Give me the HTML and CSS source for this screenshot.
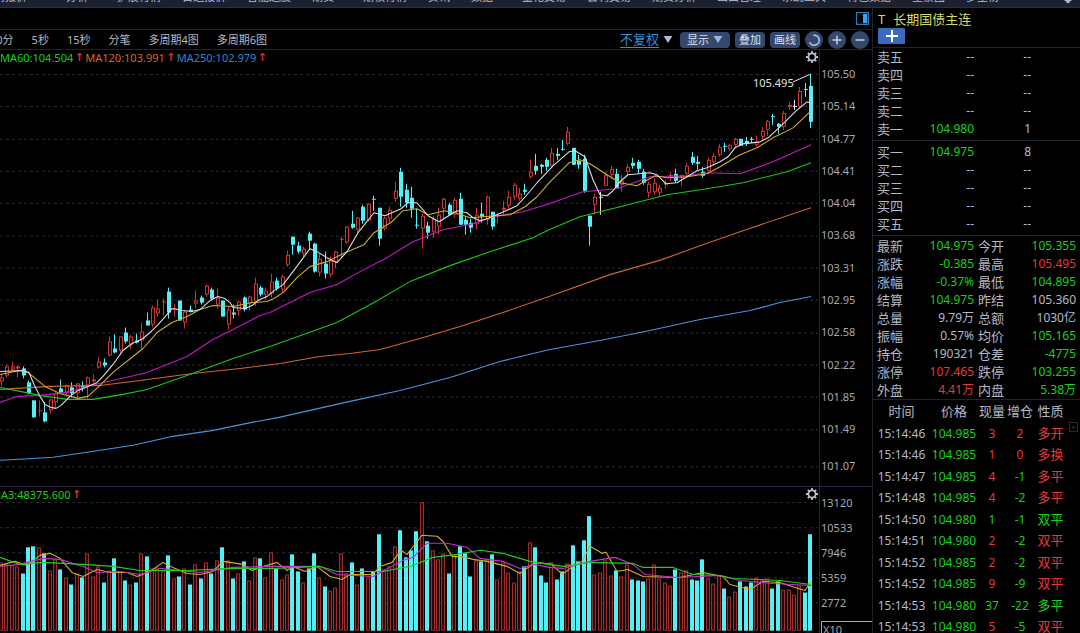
FILE: index.html
```html
<!DOCTYPE html>
<html lang="zh-CN">
<head>
<meta charset="utf-8">
<title>长期国债主连</title>
<link rel="stylesheet" href="styles.css">
</head>
<body>
<header class="menu">
  <nav class="menu-items">
    <a href="#">行情报价</a><a href="#" class="far">分析</a><a href="#" class="near">扩展行情</a><a href="#">自选报价</a><a href="#">智能选股</a><a href="#">期货</a><a href="#" class="near">期权行情</a><a href="#">资讯</a><a href="#">数据</a><a href="#" class="near">量化交易</a><a href="#">套利交易</a><a href="#">期货分析</a><a href="#">画面管理</a><a href="#">系统工具</a><a href="#">特色数据</a><a href="#">全景图</a><a href="#">多空榜</a>
  </nav>
  <svg class="menu-gear" viewBox="0 0 16 16"><circle cx="8" cy="8" r="5"/><path d="M8 12v4"/></svg>
</header>
<div class="workspace">
  <main class="chart">
    <div class="strip">
      <button class="plain" aria-label="侧栏"><svg class="side-icon" viewBox="0 0 14 14"><rect x=".7" y=".7" width="12.6" height="12.6" fill="none" stroke="#2b7fc0" stroke-width="1.3"/><rect x="7.5" y="2" width="4.5" height="10" fill="#3ba0f0"/></svg></button>
    </div>
    <div class="toolbar">
      <div class="periods">
        <button>30分</button><button>5秒</button><button>15秒</button><button>分笔</button><button>多周期4图</button><button>多周期6图</button>
      </div>
      <div class="tools">
        <button class="adjust"><span>不复权</span><svg class="caret" viewBox="0 0 10 8"><path d="M0 0h10L5 8z"/></svg></button>
        <button class="pill wide">显示<svg class="caret" viewBox="0 0 10 8"><path d="M0 0h10L5 8z"/></svg></button>
        <button class="pill">叠加</button>
        <button class="pill">画线</button>
        <button class="round" aria-label="还原"><svg viewBox="0 0 18 18"><path d="M8.5 4.2A5 5 0 1 1 4.6 11.2M8.5 4.2l2 .3"/></svg></button>
        <button class="round" aria-label="放大"><svg viewBox="0 0 18 18"><path d="M9 4.5v9M4.500 9h9"/></svg></button>
        <button class="round" aria-label="缩小"><svg viewBox="0 0 18 18"><path d="M4.500 9h9"/></svg></button>
      </div>
    </div>
    <section class="panel price">
      <div class="plot">
        <svg id="price-plot" viewBox="0 50 819 437" preserveAspectRatio="none"></svg>
        <div class="legend">
          <span class="ma60">MA60:104.504</span><i>↑</i><span class="ma120">MA120:103.991</span><i>↑</i><span class="ma250">MA250:102.979</span><i>↑</i>
        </div>
        <button class="plain gear" aria-label="设置"><svg viewBox="0 0 12 12"><circle cx="6" cy="6" r="3.600"/><path d="M6 0v2.400M6 9.600V12M0 6h2.400M9.600 6H12M1.800 1.800l1.600 1.600M8.600 8.600l1.600 1.600M10.200 1.800L8.600 3.400M3.400 8.600l-1.600 1.600"/></svg></button>
      </div>
      <div class="axis price-axis">
        <div class="ticks">
          <span>105.50</span><span>105.14</span><span>104.77</span><span>104.41</span><span>104.04</span><span>103.68</span><span>103.31</span><span>102.95</span><span>102.58</span><span>102.22</span><span>101.85</span><span>101.49</span>
        </div>
        <span class="last">101.07</span>
      </div>
    </section>
    <section class="panel volume">
      <div class="plot">
        <svg id="volume-plot" viewBox="0 488 819 145" preserveAspectRatio="none"></svg>
        <div class="legend vol-legend"><span class="ma60">MA3:48375.600</span><i>↑</i></div>
        <button class="plain gear" aria-label="设置"><svg viewBox="0 0 12 12"><circle cx="6" cy="6" r="3.600"/><path d="M6 0v2.400M6 9.600V12M0 6h2.400M9.600 6H12M1.800 1.800l1.600 1.600M8.600 8.600l1.600 1.600M10.200 1.800L8.600 3.400M3.400 8.600l-1.600 1.600"/></svg></button>
      </div>
      <div class="axis volume-axis">
        <span>13120</span><span>10533</span><span>7946</span><span>5359</span><span>2772</span>
        <span class="unit">X10</span>
      </div>
    </section>
  </main>
  <aside class="quote">
    <div class="title">
      <h1><span>T</span>长期国债主连</h1>
      <button class="add" aria-label="加自选"><svg viewBox="0 0 12 12"><path d="M6 0v12M0 6h12"/></svg></button>
    </div>
    <table class="book">
      <tr><th>卖五</th><td>--</td><td>--</td></tr>
      <tr><th>卖四</th><td>--</td><td>--</td></tr>
      <tr><th>卖三</th><td>--</td><td>--</td></tr>
      <tr><th>卖二</th><td>--</td><td>--</td></tr>
      <tr><th>卖一</th><td class="g">104.980</td><td>1</td></tr>
    </table>
    <table class="book buy">
      <tr><th>买一</th><td class="g">104.975</td><td>8</td></tr>
      <tr><th>买二</th><td>--</td><td>--</td></tr>
      <tr><th>买三</th><td>--</td><td>--</td></tr>
      <tr><th>买四</th><td>--</td><td>--</td></tr>
      <tr><th>买五</th><td>--</td><td>--</td></tr>
    </table>
    <table class="stats">
      <tr><th>最新</th><td class="g">104.975</td><th>今开</th><td class="g">105.355</td></tr>
      <tr><th>涨跌</th><td class="g">-0.385</td><th>最高</th><td class="r">105.495</td></tr>
      <tr><th>涨幅</th><td class="g">-0.37%</td><th>最低</th><td class="g">104.895</td></tr>
      <tr><th>结算</th><td class="g">104.975</td><th>昨结</th><td>105.360</td></tr>
      <tr><th>总量</th><td>9.79万</td><th>总额</th><td>1030亿</td></tr>
      <tr><th>振幅</th><td>0.57%</td><th>均价</th><td class="g">105.165</td></tr>
      <tr><th>持仓</th><td>190321</td><th>仓差</th><td class="g">-4775</td></tr>
      <tr><th>涨停</th><td class="r">107.465</td><th>跌停</th><td class="g">103.255</td></tr>
      <tr><th>外盘</th><td class="r">4.41万</td><th>内盘</th><td class="g">5.38万</td></tr>
    </table>
    <div class="trades">
      <table class="ticks-table">
        <thead><tr><th class="c-time">时间</th><th class="c-price">价格</th><th class="c-num">现量</th><th class="c-num">增仓</th><th class="c-kind">性质</th></tr></thead>
        <tbody>
          <tr><td>15:14:46</td><td class="g">104.985</td><td class="r">3</td><td class="r">2</td><td class="r k">多开</td></tr>
          <tr><td>15:14:46</td><td class="g">104.985</td><td class="r">1</td><td class="r">0</td><td class="r k">多换</td></tr>
          <tr><td>15:14:47</td><td class="g">104.985</td><td class="r">4</td><td class="g">-1</td><td class="r k">多平</td></tr>
          <tr><td>15:14:48</td><td class="g">104.985</td><td class="r">4</td><td class="g">-2</td><td class="r k">多平</td></tr>
          <tr><td>15:14:50</td><td class="g">104.980</td><td class="g">1</td><td class="g">-1</td><td class="g k">双平</td></tr>
          <tr><td>15:14:51</td><td class="g">104.980</td><td class="r">2</td><td class="g">-2</td><td class="r k">双平</td></tr>
          <tr><td>15:14:52</td><td class="g">104.985</td><td class="r">2</td><td class="g">-2</td><td class="r k">双平</td></tr>
          <tr><td>15:14:52</td><td class="g">104.985</td><td class="r">9</td><td class="g">-9</td><td class="r k">双平</td></tr>
          <tr><td>15:14:53</td><td class="g">104.980</td><td class="g">37</td><td class="g">-22</td><td class="g k">多平</td></tr>
          <tr><td>15:14:53</td><td class="g">104.980</td><td class="r">5</td><td class="g">-5</td><td class="r k">双平</td></tr>
        </tbody>
      </table>
      <div class="scroll"><button class="plain up" aria-label="上翻"><svg viewBox="0 0 10 10"><path d="M2.500 6.500L5 3.500l2.500 3z"/></svg></button></div>
    </div>
  </aside>
</div>
<script src="chart.js"></script>
</body>
</html>
```

FILE: styles.css
```css
* { box-sizing: border-box; }

body {
  margin: 0;
  height: 100vh;
  display: flex;
  flex-direction: column;
  overflow: hidden;
  background: #000;
  color: #b4b8c6;
  font-family: "Noto Sans", "Noto Sans CJK SC", sans-serif;
  font-size: 12px;
}

button {
  font: inherit;
  color: inherit;
  border: 0;
  padding: 0;
  background: none;
  white-space: nowrap;
}

.plain { display: block; line-height: 0; }

/* menu bar */
.menu {
  flex: none;
  height: 8px;
  display: flex;
  align-items: flex-end;
  justify-content: space-between;
  overflow: hidden;
  background: #1b2130;
  border-bottom: 1px solid #2b3040;
  padding: 0 4px 4px 0;
}
.menu-items { display: flex; gap: 21px; margin-left: -17px; }
.menu-items a {
  color: #b9bfce;
  font-size: 11px;
  line-height: 12px;
  text-decoration: none;
  white-space: nowrap;
}
.menu-items .far { margin-left: 18px; }
.menu-items .near { margin-left: 8px; }
.menu-gear { width: 16px; height: 16px; fill: #b9bfce; stroke: #b9bfce; stroke-width: 3; }

.workspace { flex: 1; min-height: 0; display: flex; }

/* chart side */
.chart { flex: 1; min-width: 0; display: flex; flex-direction: column; }
.strip {
  flex: none;
  height: 22px;
  display: flex;
  justify-content: flex-end;
  align-items: center;
  padding: 0 3px;
  border-bottom: 1px solid #20222c;
}
.side-icon { width: 13px; height: 13px; }
.toolbar {
  flex: none;
  height: 20px;
  display: flex;
  justify-content: space-between;
  align-items: center;
  border-bottom: 1px solid #20222c;
  padding-right: 3px;
}
.periods { display: flex; gap: 18px; margin-left: -10px; font-size: 11px; line-height: 18px; }
.tools { display: flex; align-items: center; gap: 5px; }
.adjust { display: flex; align-items: center; gap: 4px; font-size: 13px; color: #2f8fd6; margin-right: 2px; }
.adjust span { line-height: 16px; border-bottom: 1px solid #2f8fd6; }
.caret { width: 10px; height: 7px; fill: #b4b8d0; }
.pill {
  height: 16px;
  padding: 0 4px;
  border-radius: 4px;
  background: #34486e;
  color: #dde4f2;
  font-size: 11px;
  line-height: 16px;
}
.pill.wide { display: flex; align-items: center; gap: 4px; padding: 0 7px; }
.pill .caret { fill: #9fb4dc; }
.round { width: 18px; height: 18px; border-radius: 50%; background: #34486e; }
.round svg { display: block; fill: none; stroke: #c4cfe4; stroke-width: 1.5; }

.panel { display: flex; min-height: 0; }
.price { flex: 437 1 0; }
.volume { flex: 146 1 0; border-top: 1px solid #2c2b42; }
.plot { flex: 1; min-width: 0; position: relative; }
.plot > svg { position: absolute; width: 100%; height: 100%; }
.legend {
  position: absolute;
  top: 0;
  left: 0;
  display: flex;
  font-size: 11px;
  line-height: 15px;
  white-space: nowrap;
}
.legend i { width: 12px; text-align: center; font-style: normal; font-weight: 700; color: #e02b3c; font-family: "DejaVu Sans", sans-serif; }
.vol-legend { left: -9px; }
.ma60 { color: #14d314; }
.ma120 { color: #d8691f; }
.ma250 { color: #2f86d2; }
.gear { position: absolute; top: 1px; right: 1px; }
.gear svg { width: 12px; height: 12px; fill: none; stroke: #b9bfd0; stroke-width: 1.800; }
.axis {
  flex: none;
  width: 53px;
  border-left: 1px solid #24242f;
  padding-left: 1px;
  display: flex;
  flex-direction: column;
  overflow: hidden;
  color: #a6a8b4;
  font-size: 11px;
  line-height: 18px;
}
.price-axis { padding-top: 15px; padding-bottom: 11px; }
.ticks { flex: 1; display: flex; flex-direction: column; justify-content: space-between; }
.last { margin-top: 19px; }
.volume-axis { padding-top: 3px; line-height: 25px; }
.unit {
  flex: none;
  margin-top: 6px;
  padding-left: 1px;
  border: solid #a6a8b4;
  border-width: 1px 0 0 1px;
  line-height: 16px;
}

/* quote side */
.quote {
  flex: none;
  width: 208px;
  border-left: 1px solid #20222e;
  overflow: hidden;
  display: flex;
  flex-direction: column;
}
.title { height: 40px; flex: none; padding: 2px 5px; border-bottom: 1px solid #20222c; }
h1 { margin: 0; display: flex; gap: 8px; font-size: 13px; line-height: 18px; font-weight: 400; color: #d3d86a; }
.add { display: flex; align-items: center; justify-content: center; width: 27px; height: 16px; background: #3a6abf; border-radius: 1px; }
.add svg { width: 12px; height: 12px; stroke: #fff; stroke-width: 2; }

table { border-collapse: collapse; table-layout: fixed; flex: none; }
th, td { padding: 0; font-weight: 400; white-space: nowrap; line-height: 18px; height: 18px; }
th { font-size: 13px; }
.book, .stats { display: grid; border-bottom: 1px solid #20222c; padding: 0 4px; }
.book tbody, .stats tbody { display: block; }
.book tr { display: grid; grid-template-columns: 26px 71px 57px; }
.stats tr { display: grid; grid-template-columns: 26px 71px 30px 1fr; }
.book th, .stats th { text-align: left; }
.stats th + td + th { padding-left: 4px; }
.book td, .stats td { text-align: right; }
.book { height: 93px; }
.book.buy { height: 95px; padding-top: 2px; }
.stats { height: 164px; padding-top: 1px; }

.g { color: #16d116; }
.r { color: #e23a3a; }
.k { font-size: 13px; }

.trades { flex: 1; min-height: 0; display: flex; justify-content: space-between; }
.ticks-table { width: 194px; }
.ticks-table th, .ticks-table td { text-align: center; height: 22px; line-height: 21px; }
.ticks-table tr:nth-child(even) td { height: 21px; }
.c-time { width: 57px; }
.c-price { width: 48px; }
.c-num { width: 28px; }
.c-kind { width: 33px; }
.scroll { padding: 22px 2px 0 0; }
.up svg { width: 9px; height: 10px; fill: #3a3a42; border: 1px solid #2a2a30; }
```

FILE: chart.js
```js
const NS = "http://www.w3.org/2000/svg";
const STEP = 5.395;
const CYAN = "#54f0f8";
const RED = "#d03434";

// kind, high, body top, body bottom, low
const candles = `r 375 378 382 387;r 365 367 376 378;r 362 367 370 372;r 366 367 369 378;c 367 369 376 379;c 381 383 394 395;c 401 401 418 418;r 401 411 412 417;c 403 413 422 423;r 400 400 411 414;
r 393 394 403 408;c 380 389 393 394;r 385 386 393 395;c 383 388 394 398;r 384 384 394 399;c 382 386 388 392;r 377 378 386 399;r 375 380 382 383;r 358 362 368 369;c 359 363 366 368;
r 337 342 356 357;c 335 349 353 354;r 337 337 351 355;c 328 333 342 344;r 335 337 345 349;c 334 341 343 344;r 323 332 341 349;c 313 321 326 326;r 306 308 325 328;r 300 309 314 317;
r 299 302 303 316;c 288 292 313 319;r 304 309 310 317;c 301 301 321 321;r 311 312 323 329;c 306 310 312 313;r 291 301 304 309;c 296 298 303 305;r 285 286 295 297;c 288 290 299 301;
r 289 298 305 309;c 301 301 317 317;r 307 310 325 330;c 305 313 315 319;r 301 302 311 316;c 297 298 310 312;r 296 297 304 311;r 278 284 302 306;c 286 288 295 297;r 288 291 295 300;
r 274 282 294 298;c 278 281 289 291;r 275 277 290 293;r 251 255 265 267;c 237 237 245 255;c 242 246 252 254;r 247 249 254 257;c 232 234 241 250;c 243 244 272 273;r 254 259 273 277;
c 252 264 274 279;r 257 261 275 277;r 251 252 262 269;r 237 239 240 258;r 226 227 243 244;c 211 224 228 229;r 217 218 230 232;c 205 207 221 224;r 204 204 221 222;c 196 199 200 211;
c 208 208 239 246;r 217 218 229 231;r 207 210 219 223;r 182 191 199 202;c 168 172 197 207;c 184 190 203 208;c 187 198 209 218;c 209 225 226 229;r 214 216 229 249;c 222 226 233 239;
r 216 219 232 238;r 208 215 227 235;r 198 199 209 219;c 203 205 215 216;r 198 200 215 218;c 193 199 225 225;c 217 220 225 235;c 219 223 228 233;r 208 215 224 230;c 203 214 217 223;
r 196 197 220 225;c 212 212 227 230;r 213 216 217 224;r 201 208 210 215;r 191 197 206 209;r 183 185 197 200;r 188 194 199 201;c 184 190 192 195;r 160 172 177 179;c 154 166 171 175;
c 164 165 167 174;c 158 160 167 171;r 148 153 166 168;c 148 154 156 160;c 140 149 150 151;r 127 132 144 145;c 148 148 165 165;c 155 161 165 169;c 155 159 191 193;c 216 216 227 246;
r 194 197 205 215;w 192 197 198 215;r 172 175 186 186;r 166 169 175 179;c 169 174 188 188;r 175 181 185 192;r 164 167 172 176;c 158 163 166 169;c 160 162 169 174;c 169 172 183 185;
r 182 184 193 198;r 179 183 192 195;r 185 188 193 197;r 180 183 185 189;r 172 175 177 181;c 169 174 181 183;r 175 175 178 186;r 163 166 174 177;c 152 157 163 165;c 156 162 164 170;
c 167 172 176 178;r 158 160 171 173;r 153 156 162 166;r 144 147 155 157;c 143 146 147 152;r 144 145 149 151;r 138 139 145 147;c 139 139 146 146;c 137 141 144 146;c 137 139 140 143;
r 136 142 145 147;r 127 131 137 140;r 120 121 130 136;c 114 116 117 125;c 123 124 127 134;r 111 113 127 130;r 102 105 107 110;w 100 106 107 110;r 87 91 107 109;c 83 89 90 97;c 74 86 122 128`
  .split(";").map(row => {
    const [kind, ...n] = row.trim().split(" ");
    return [kind, ...n.map(Number)];
  });

const volumes = `563 565 566 567 574 548 547 548 554 571 560 570 578 585 574 578 554 577 567 583
571 559 572 581 585 583 554 557 569 568 571 556 579 577 569 585 565 579 563 574
561 548 561 579 574 562 581 558 559 578 553 569 580 575 555 572 583 569 554 578
587 591 588 554 574 563 585 569 578 572 535 570 567 547 531 558 551 532 503 542
551 560 554 574 556 547 554 577 561 562 560 555 580 563 573 583 572 567 543 548
576 583 563 580 572 564 546 562 541 517 575 573 561 576 571 577 565 580 581 582
579 565 579 583 586 570 573 571 580 581 560 579 584 576 589 597 592 582 587 583
578 580 579 589 582 590 590 595 586 593 535`.split(/\s+/).map(Number);

const priceLines = {
  "#4a94e0": "0,461 20,460 53,458 87,453 133,446 173,437 213,431 247,424 279,418 350,402 400,391 450,378 500,362 550,350 600,341 650,331 700,320 750,311 780,303 811,297",
  "#d0662c": "0,390 50,387 100,386 140,381 193,374 240,369 280,364 320,357 350,354 380,350 420,339 460,327 500,314 549,297 610,275 662,260 700,246 740,232 811,208",
  "#18c818": "0,388 20,392 40,396 67,400 93,400 123,395 147,390 187,376 233,359 270,347 337,323 374,303 410,282 450,266 490,252 533,238 549,230 580,217 620,207 667,195 707,189 743,183 787,172 811,163",
  "#c818c8": "0,403 17,397 40,396 67,393 90,386 117,380 147,373 167,365 187,357 213,340 233,330 260,316 270,313 310,293 337,285 360,272 387,258 413,242 443,230 473,224 493,217 523,212 549,204 583,192 617,189 650,177 687,176 707,173 740,174 773,162 811,145",
  "#d2ae28": "0,375 20,371 28,373 45,387 60,394 78,399 88,397 100,386 113,373 133,357 143,349 157,333 172,323 187,317 200,310 213,306 233,307 252,303 267,302 274,299 283,293 298,277 310,267 327,262 345,253 364,245 374,233 392,222 403,211 417,209 428,215 445,211 455,213 470,218 483,217 510,215 525,207 537,197 549,183 569,163 580,160 590,164 607,175 620,183 637,186 655,176 667,178 687,177 707,174 720,167 740,155 757,148 773,138 793,128 810,112",
  "#e0dce0": "0,372 23,371 29,373 34,385 40,397 45,405 51,408 56,409 61,406 70,397 78,391 88,387 97,383 103,377 113,365 123,351 132,344 137,342 143,339 150,333 158,325 167,315 172,309 183,311 192,312 200,310 210,301 218,297 225,299 230,303 233,308 245,309 252,306 258,301 267,297 274,291 283,285 293,272 310,249 317,252 327,258 337,263 347,252 358,233 374,213 385,216 401,209 408,203 417,203 428,216 439,222 447,217 457,211 467,213 473,218 480,221 487,219 497,215 517,206 527,195 537,183 553,166 569,152 575,151 585,157 593,180 600,195 607,196 613,191 620,182 628,175 650,173 657,175 666,184 677,183 687,177 697,171 707,168 720,162 728,157 735,148 743,144 760,142 768,138 780,127 795,112 807,102 811,103"
};

const volumeLines = {
  "#d2ae28": "0,566 15,562 27,566 40,556 50,554 60,559 72,573 83,577 97,570 110,573 127,573 137,577 150,572 163,563 173,568 187,574 200,575 213,572 223,562 243,565 252,571 263,567 277,563 287,571 293,567 305,572 317,567 330,577 342,580 350,575 373,575 380,567 392,563 401,551 407,555 422,536 437,537 443,542 452,557 465,558 473,560 487,562 507,567 520,574 535,563 552,565 562,575 573,567 582,562 590,547 602,554 606,553 617,572 628,570 643,577 680,578 703,573 723,577 730,585 750,590 763,582 780,583 795,588 805,591 811,582",
  "#c830c8": "0,567 20,565 43,559 60,560 83,567 97,573 120,572 140,575 160,569 200,573 233,568 270,567 320,567 337,575 373,577 403,561 413,558 427,544 447,544 467,548 480,559 503,562 520,569 535,565 549,568 563,569 590,562 615,558 633,565 645,575 677,578 720,576 740,581 773,584 811,586",
  "#20d020": "0,558 20,565 43,563 83,565 113,567 140,571 187,571 233,569 275,569 320,567 337,572 383,572 410,567 433,558 457,555 480,551 503,554 530,562 549,565 563,567 590,563 633,564 643,568 673,568 693,575 720,576 733,579 780,581 811,585"
};

function draw(svg, tag, attrs) {
  const el = document.createElementNS(NS, tag);
  for (const key in attrs) el.setAttribute(key, attrs[key]);
  svg.appendChild(el);
  return el;
}

function grid(svg, levels) {
  for (const y of levels) {
    draw(svg, "path", { d: `M0 ${y + 0.5}H818`, stroke: "#292d30", "stroke-dasharray": "3 3" });
  }
}

function lines(svg, set) {
  for (const color in set) {
    draw(svg, "polyline", { points: set[color], fill: "none", stroke: color, "stroke-width": 1.1, "stroke-linejoin": "round" });
  }
}

function box(svg, x, top, bottom, fill, stroke) {
  draw(svg, "rect", { x: x + 0.5, y: top + 0.5, width: 3, height: Math.max(bottom - top - 1, 1), fill, stroke });
}

const price = document.getElementById("price-plot");
grid(price, [74, 106, 139, 171, 203, 236, 268, 300, 333, 365, 397, 430, 467]);
candles.forEach(([kind, high, top, bottom, low], i) => {
  const x = Math.round(2 + STEP * i);
  const color = kind === "r" ? RED : kind === "c" ? CYAN : "#e8e8e8";
  draw(price, "rect", { x: x - 1, y: high, width: 1, height: low - high, fill: color });
  if (kind === "r" && bottom - top > 2) box(price, x - 2, top, bottom, "#000", RED);
  else draw(price, "rect", { x: x - 2, y: top, width: 4, height: bottom - top, fill: color });
});
lines(price, priceLines);
draw(price, "path", { d: "M793 82L811 74", stroke: "#e0e0e0" });
draw(price, "text", { x: 753, y: 87, fill: "#e0e0e0", "font-size": 11 }).textContent = "105.495";

const volume = document.getElementById("volume-plot");
grid(volume, [503, 528, 553, 578, 603]);
volumes.forEach((top, i) => {
  const x = Math.round(1 + STEP * i) - 2;
  if (candles[i][0] === "c") draw(volume, "rect", { x, y: top, width: 4, height: 631 - top, fill: CYAN });
  else box(volume, x, top, 631, "#2c0707", "#a02c2c");
});
lines(volume, volumeLines);
```
